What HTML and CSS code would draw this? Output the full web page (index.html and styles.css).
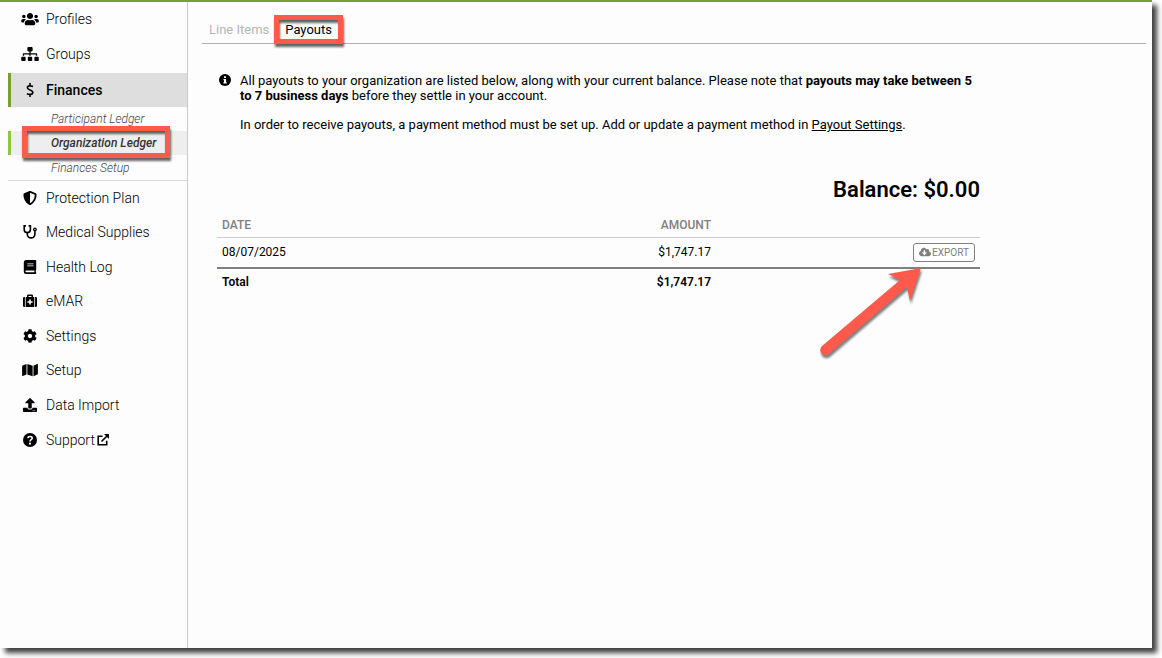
FILE: index.html
```html
<!DOCTYPE html>
<html lang="en">
<head>
  <meta charset="utf-8">
  <title>Organization Ledger</title>
  <link rel="stylesheet" href="styles.css">
</head>
<body>
  <div class="window">
    <nav class="sidebar">
      <a class="item" href="#">
        <svg class="icon wide" viewBox="0 0 640 512"><path d="M96 224c35.300 0 64-28.700 64-64s-28.700-64-64-64-64 28.700-64 64 28.700 64 64 64zm448 0c35.300 0 64-28.700 64-64s-28.700-64-64-64-64 28.700-64 64 28.700 64 64 64zm32 32h-64c-17.600 0-33.500 7.100-45.100 18.600 40.300 22.100 68.900 62 75.100 109.400h66c17.700 0 32-14.300 32-32v-32c0-35.300-28.700-64-64-64zm-256 0c61.900 0 112-50.100 112-112S381.900 32 320 32 208 82.100 208 144s50.100 112 112 112zm76.800 32h-8.300c-20.800 10-43.900 16-68.500 16s-47.600-6-68.500-16h-8.300C179.600 288 128 339.600 128 403.200V432c0 26.500 21.500 48 48 48h288c26.500 0 48-21.500 48-48v-28.800c0-63.600-51.600-115.200-115.200-115.200zm-223.700-13.400C161.500 263.100 145.600 256 128 256H64c-35.300 0-64 28.700-64 64v32c0 17.700 14.300 32 32 32h65.900c6.300-47.400 34.900-87.300 75.200-109.400z"/></svg>
        Profiles
      </a>
      <a class="item" href="#">
        <svg class="icon wide" viewBox="0 0 640 512"><path d="M128 352H32c-17.700 0-32 14.300-32 32v96c0 17.700 14.300 32 32 32h96c17.700 0 32-14.300 32-32v-96c0-17.700-14.300-32-32-32zm-24-80h192v48h48v-48h192v48h48v-57.600c0-21.200-17.200-38.400-38.400-38.400H344v-64h40c17.700 0 32-14.300 32-32V32c0-17.700-14.300-32-32-32H256c-17.700 0-32 14.300-32 32v96c0 17.700 14.300 32 32 32h40v64H94.400C73.200 224 56 241.200 56 262.400V320h48v-48zm264 80h-96c-17.700 0-32 14.300-32 32v96c0 17.700 14.300 32 32 32h96c17.700 0 32-14.300 32-32v-96c0-17.700-14.300-32-32-32zm240 0h-96c-17.700 0-32 14.300-32 32v96c0 17.700 14.300 32 32 32h96c17.700 0 32-14.300 32-32v-96c0-17.700-14.300-32-32-32z"/></svg>
        Groups
      </a>
      <a class="item current" href="#">
        <svg class="icon" viewBox="0 0 14 14"><path class="line" d="M7 0v2.500M7 11.500V14M10 3.400C8.500 2.800 4.400 2.200 4.400 4.800 4.400 7.300 9.800 6.600 9.800 9.400 9.800 12 5.600 11.600 3.900 10.700"/></svg>
        Finances
      </a>
      <div class="sub">
        <a href="#">Participant Ledger</a>
        <a class="active" href="#">Organization Ledger<span class="mark"></span></a>
        <a href="#">Finances Setup</a>
      </div>
      <div class="more">
        <a class="item" href="#">
          <svg class="icon" viewBox="0 0 512 512"><path d="M466.500 83.700l-192-80a48.200 48.200 0 0 0-36.900 0l-192 80C27.700 91.100 16 108.600 16 128c0 198.500 114.500 335.700 221.500 380.300 11.800 4.900 25.100 4.900 36.900 0C360.100 472.600 496 349.300 496 128c0-19.400-11.700-36.900-29.500-44.300zM256.100 446.300l-.1-381 175.900 73.300c-3.300 151.400-82.100 261.100-175.800 307.700z"/></svg>
          Protection Plan
        </a>
        <a class="item" href="#">
          <svg class="icon" viewBox="0 0 14 14"><path class="line" d="M3 .9H1.200v3.600a3.100 3.100 0 0 0 6.200 0V.9H5.600M4.300 7.800v1.500a3.800 3.600 0 0 0 7.600 0V6"/><circle cx="11.900" cy="4.400" r="1.900"/><circle class="hole" cx="11.900" cy="4.400" r=".6"/></svg>
          Medical Supplies
        </a>
        <a class="item" href="#">
          <svg class="icon" viewBox="0 0 14 14"><path d="M3.300 0H12.400q.8 0 .8.800V9.600q0 .6-.4.800v1.700q.4.100.4.600v.6q0 .7-.8.700H3.300Q.8 14 .8 11.500v-9Q.8 0 3.300 0z"/><path class="hole" d="M4.300 3.400h6.300v.9H4.300zM4.300 5.400h6.300v.9H4.300zM3.300 10.600h8.100v1.600H3.300q-.8 0-.8-.8t.8-.8z"/></svg>
          Health Log
        </a>
        <a class="item" href="#">
          <svg class="icon" viewBox="0 0 14 14"><path d="M1.300 3h.6v10h-.6Q0 13 0 11.700V4.300Q0 3 1.300 3zM12.700 3h-.6v10h.6Q14 13 14 11.700V4.300Q14 3 12.700 3zM2.700 3H4V1.800Q4 .6 5.200.6h3.600Q10 .6 10 1.800V3h1.300v10H2.700zM5.500 2v1h3V2z"/><path class="hole" d="M6.200 5.400h1.600v1.800h1.800v1.600H7.800v1.800H6.200V8.800H4.400V7.200h1.800z"/></svg>
          eMAR
        </a>
        <a class="item" href="#">
          <svg class="icon" viewBox="0 0 512 512"><path d="M487.400 315.700l-42.600-24.600c4.300-23.200 4.300-47 0-70.200l42.600-24.600c4.900-2.800 7.100-8.600 5.500-14-11.100-35.600-30-67.800-54.700-94.600-3.800-4.100-10-5.100-14.800-2.300L380.800 110c-17.900-15.400-38.500-27.300-60.800-35.100V25.800c0-5.600-3.900-10.500-9.400-11.700-36.700-8.200-74.300-7.800-109.200 0-5.500 1.200-9.400 6.100-9.400 11.700V75c-22.200 7.900-42.800 19.800-60.800 35.100L88.700 85.500c-4.900-2.800-11-1.900-14.800 2.300-24.700 26.700-43.600 58.900-54.700 94.600-1.700 5.400.6 11.200 5.500 14L67.300 221c-4.300 23.200-4.300 47 0 70.200l-42.600 24.600c-4.900 2.800-7.100 8.600-5.500 14 11.100 35.600 30 67.800 54.700 94.600 3.800 4.100 10 5.100 14.800 2.300l42.600-24.600c17.900 15.400 38.500 27.300 60.800 35.100v49.200c0 5.600 3.900 10.500 9.400 11.700 36.700 8.200 74.300 7.800 109.200 0 5.500-1.200 9.400-6.100 9.400-11.700v-49.200c22.200-7.900 42.800-19.800 60.800-35.100l42.600 24.600c4.900 2.800 11 1.900 14.800-2.300 24.700-26.700 43.600-58.900 54.700-94.600 1.500-5.500-.7-11.300-5.600-14.100zM256 336c-44.100 0-80-35.900-80-80s35.900-80 80-80 80 35.900 80 80-35.900 80-80 80z"/></svg>
          Settings
        </a>
        <a class="item" href="#">
          <svg class="icon" viewBox="0 0 576 512"><path d="M0 117.700v346.300c0 11.300 11.400 19.100 21.900 14.900L160 416V32L20.100 88A32 32 0 0 0 0 117.700zM192 416l192 64V96L192 32v384zM554.100 33.200L416 96v384l139.900-56A32 32 0 0 0 576 394.300V48c0-11.300-11.400-19.100-21.900-14.800z"/></svg>
          Setup
        </a>
        <a class="item" href="#">
          <svg class="icon" viewBox="0 0 512 512"><path d="M296 384h-80c-13.300 0-24-10.700-24-24V192h-87.700c-17.800 0-26.700-21.500-14.100-34.100L242.300 5.700c7.500-7.500 19.800-7.500 27.300 0l152.200 152.200c12.600 12.600 3.700 34.100-14.100 34.100H320v168c0 13.300-10.700 24-24 24zm216-8v112c0 13.300-10.700 24-24 24H24c-13.300 0-24-10.700-24-24V376c0-13.300 10.700-24 24-24h136v8c0 30.900 25.100 56 56 56h80c30.900 0 56-25.100 56-56v-8h136c13.300 0 24 10.700 24 24zm-124 88c0-11-9-20-20-20s-20 9-20 20 9 20 20 20 20-9 20-20zm64 0c0-11-9-20-20-20s-20 9-20 20 9 20 20 20 20-9 20-20z"/></svg>
          Data Import
        </a>
        <a class="item external" href="#">
          <svg class="icon" viewBox="0 0 14 14"><circle cx="7" cy="7" r="7"/><path class="line light" d="M4.900 5.200C5.100 3 9.300 3 9.200 5.200 9.200 6.700 7 6.600 7 8.400"/><circle class="hole" cx="7" cy="10.700" r="1.100"/></svg>
          Support
          <svg class="out" viewBox="0 0 12 12"><path class="line" d="M5.500 2.300H1.200v8.500h8.500V6.800M4.500 7.500L10 2"/><path d="M7 0h5v5z"/></svg>
        </a>
      </div>
    </nav>

    <main>
      <div class="tabs">
        <a href="#">Line Items</a>
        <a class="on" href="#">Payouts<span class="mark"></span></a>
      </div>

      <div class="content">
        <div class="info">
          <svg viewBox="0 0 12 12"><circle cx="6" cy="6" r="6"/><path class="hole" d="M5 2.200h2v1.800H5zM4.500 5h2.600v3.300h.6v1.300H4.400V8.300H5V6.200h-.5z"/></svg>
          <div>
            <p>All payouts to your organization are listed below, along with your current balance. Please note that <b>payouts may take between 5 to 7 business days</b> before they settle in your account.</p>
            <p>In order to receive payouts, a payment method must be set up. Add or update a payment method in <a href="#">Payout Settings</a>.</p>
          </div>
        </div>

        <h2>Balance: $0.00</h2>

        <table>
          <thead>
            <tr><th>Date</th><th class="amount">Amount</th><th class="action"></th></tr>
          </thead>
          <tbody>
            <tr>
              <td>08/07/2025</td>
              <td class="amount">$1,747.17</td>
              <td class="action">
                <button type="button">
                  <svg class="cloud" viewBox="0 0 640 512"><path d="M537.600 226.600c4.100-10.700 6.400-22.400 6.400-34.600 0-53-43-96-96-96-19.700 0-38.100 6-53.300 16.200C367 64.200 315.300 32 256 32c-88.400 0-160 71.600-160 160 0 2.700.1 5.400.2 8.100C40.200 219.800 0 273.200 0 336c0 79.500 64.500 144 144 144h368c70.700 0 128-57.300 128-128 0-61.900-44-113.600-102.400-125.400zm-132.900 88.700L299.300 420.700c-6.200 6.200-16.400 6.200-22.600 0L171.300 315.300c-10.100-10.100-2.900-27.300 11.300-27.300H248V176c0-8.800 7.200-16 16-16h48c8.800 0 16 7.200 16 16v112h65.400c14.200 0 21.400 17.200 11.300 27.300z"/></svg>
                  Export
                  <svg class="arrow" viewBox="0 0 108 100"><path d="M104 5L71 11 83 17 5 83A5 5 0 0 0 12 91L90 24 93 38z"/></svg>
                </button>
              </td>
            </tr>
          </tbody>
          <tfoot>
            <tr><td>Total</td><td class="amount">$1,747.17</td><td></td></tr>
          </tfoot>
        </table>
      </div>
    </main>
  </div>
</body>
</html>
```
FILE: styles.css
```css
* {
  box-sizing: border-box;
}

body {
  margin: 0;
  background: #fff;
  color: #000;
  font-family: Roboto, "Liberation Sans", sans-serif;
  font-size: 13px;
}

a {
  color: inherit;
}

.window {
  display: flex;
  min-height: calc(100vh - 10px);
  margin: 0 10px 10px 0;
  border-top: 2px solid #789f2f;
  background: #fdfdfd;
  box-shadow: 5px 5px 5px rgba(0, 0, 0, .75);
}

/* sidebar */
.sidebar {
  flex: none;
  width: 188px;
  padding-left: 8px;
  border-right: 1px solid #c8c8c8;
}

.item {
  display: flex;
  align-items: center;
  height: 34px;
  margin-bottom: 1px;
  padding-left: 11px;
  font-size: 14px;
  font-weight: 300;
  text-decoration: none;
}

.item.current {
  margin-top: 2px;
  margin-bottom: 0;
  padding-left: 8px;
  border-left: 3px solid #789f2f;
  background: #dedede;
  font-weight: 500;
}

.icon {
  width: 22px;
  height: 14px;
  margin-right: 5px;
}

.line {
  fill: none;
  stroke: #000;
  stroke-width: 1.6;
}

.line.light {
  stroke: #fdfdfd;
}

.hole {
  fill: #fdfdfd;
}

.out {
  width: 12px;
  height: 12px;
  margin-left: 2px;
}

.sub {
  border-bottom: 1px solid #d8d8d8;
}

.sub a {
  display: block;
  position: relative;
  padding-left: 43px;
  color: #444;
  font-size: 12px;
  font-style: italic;
  font-weight: 300;
  line-height: 24px;
  text-decoration: none;
}

.sub a.active {
  margin-bottom: 1px;
  padding-left: 40px;
  border-left: 3px solid #8dc63f;
  background: #eee;
  color: #333;
  font-weight: 500;
}

.more .item {
  margin-bottom: 0;
}

.more .item:nth-child(even) {
  margin-bottom: 1px;
}

.more .item.external {
  height: 36px;
}

/* red callouts */
.mark {
  position: absolute;
  border: 5px solid #ff5a4b;
  filter: drop-shadow(1px 3px 1px rgba(0, 0, 0, .6));
}

.sub .mark {
  top: -5px;
  bottom: -3px;
  left: 11px;
  right: 17px;
}

.tabs .mark {
  top: -7px;
  bottom: -7px;
  left: -11px;
  right: -11px;
}

.arrow {
  position: absolute;
  top: 19px;
  right: 49px;
  width: 108px;
  height: 100px;
  fill: #ff5a4b;
  filter: drop-shadow(1px 3px 1px rgba(0, 0, 0, .5));
  pointer-events: none;
}

/* main */
main {
  flex: 1;
  padding: 0 6px 0 14px;
}

.tabs {
  display: flex;
  gap: 16px;
  padding: 20px 7px 6px;
  border-bottom: 1px solid #b0b0b0;
  line-height: 15px;
}

.tabs a {
  position: relative;
  color: #b5b5b5;
  text-decoration: none;
}

.tabs a.on {
  color: #000;
}

.content {
  max-width: 778px;
  padding: 29px 0 0 15px;
}

.info {
  display: flex;
  gap: 9px;
  padding-left: 2px;
  line-height: 15px;
}

.info svg {
  flex: none;
  width: 12px;
  height: 12px;
  margin-top: 1px;
}

.info p {
  margin: 0 0 14px;
}

h2 {
  margin: 31px 0 0;
  font-size: 22px;
  font-weight: 600;
  line-height: 26px;
  text-align: right;
}

table {
  width: 100%;
  margin-top: 10px;
  border-collapse: collapse;
  font-size: 12px;
  table-layout: fixed;
}

th, td {
  padding: 0 5px;
  text-align: left;
}

th {
  height: 24px;
  color: #808080;
  font-weight: 500;
  text-transform: uppercase;
}

tbody td {
  height: 31px;
  border-top: 1px solid #ccc;
  border-bottom: 2px solid #808080;
}

tfoot td {
  height: 27px;
  font-weight: 600;
}

.amount {
  text-align: right;
}

.action {
  width: 264px;
  text-align: right;
}

button {
  display: inline-flex;
  position: relative;
  align-items: center;
  gap: 1px;
  height: 19px;
  padding: 0 5px;
  border: 1px solid #808080;
  border-radius: 3px;
  background: #fff;
  color: #808080;
  font-family: inherit;
  font-size: 10px;
  text-transform: uppercase;
  vertical-align: middle;
}

.cloud {
  width: 12px;
  height: 10px;
  fill: #808080;
}
```
